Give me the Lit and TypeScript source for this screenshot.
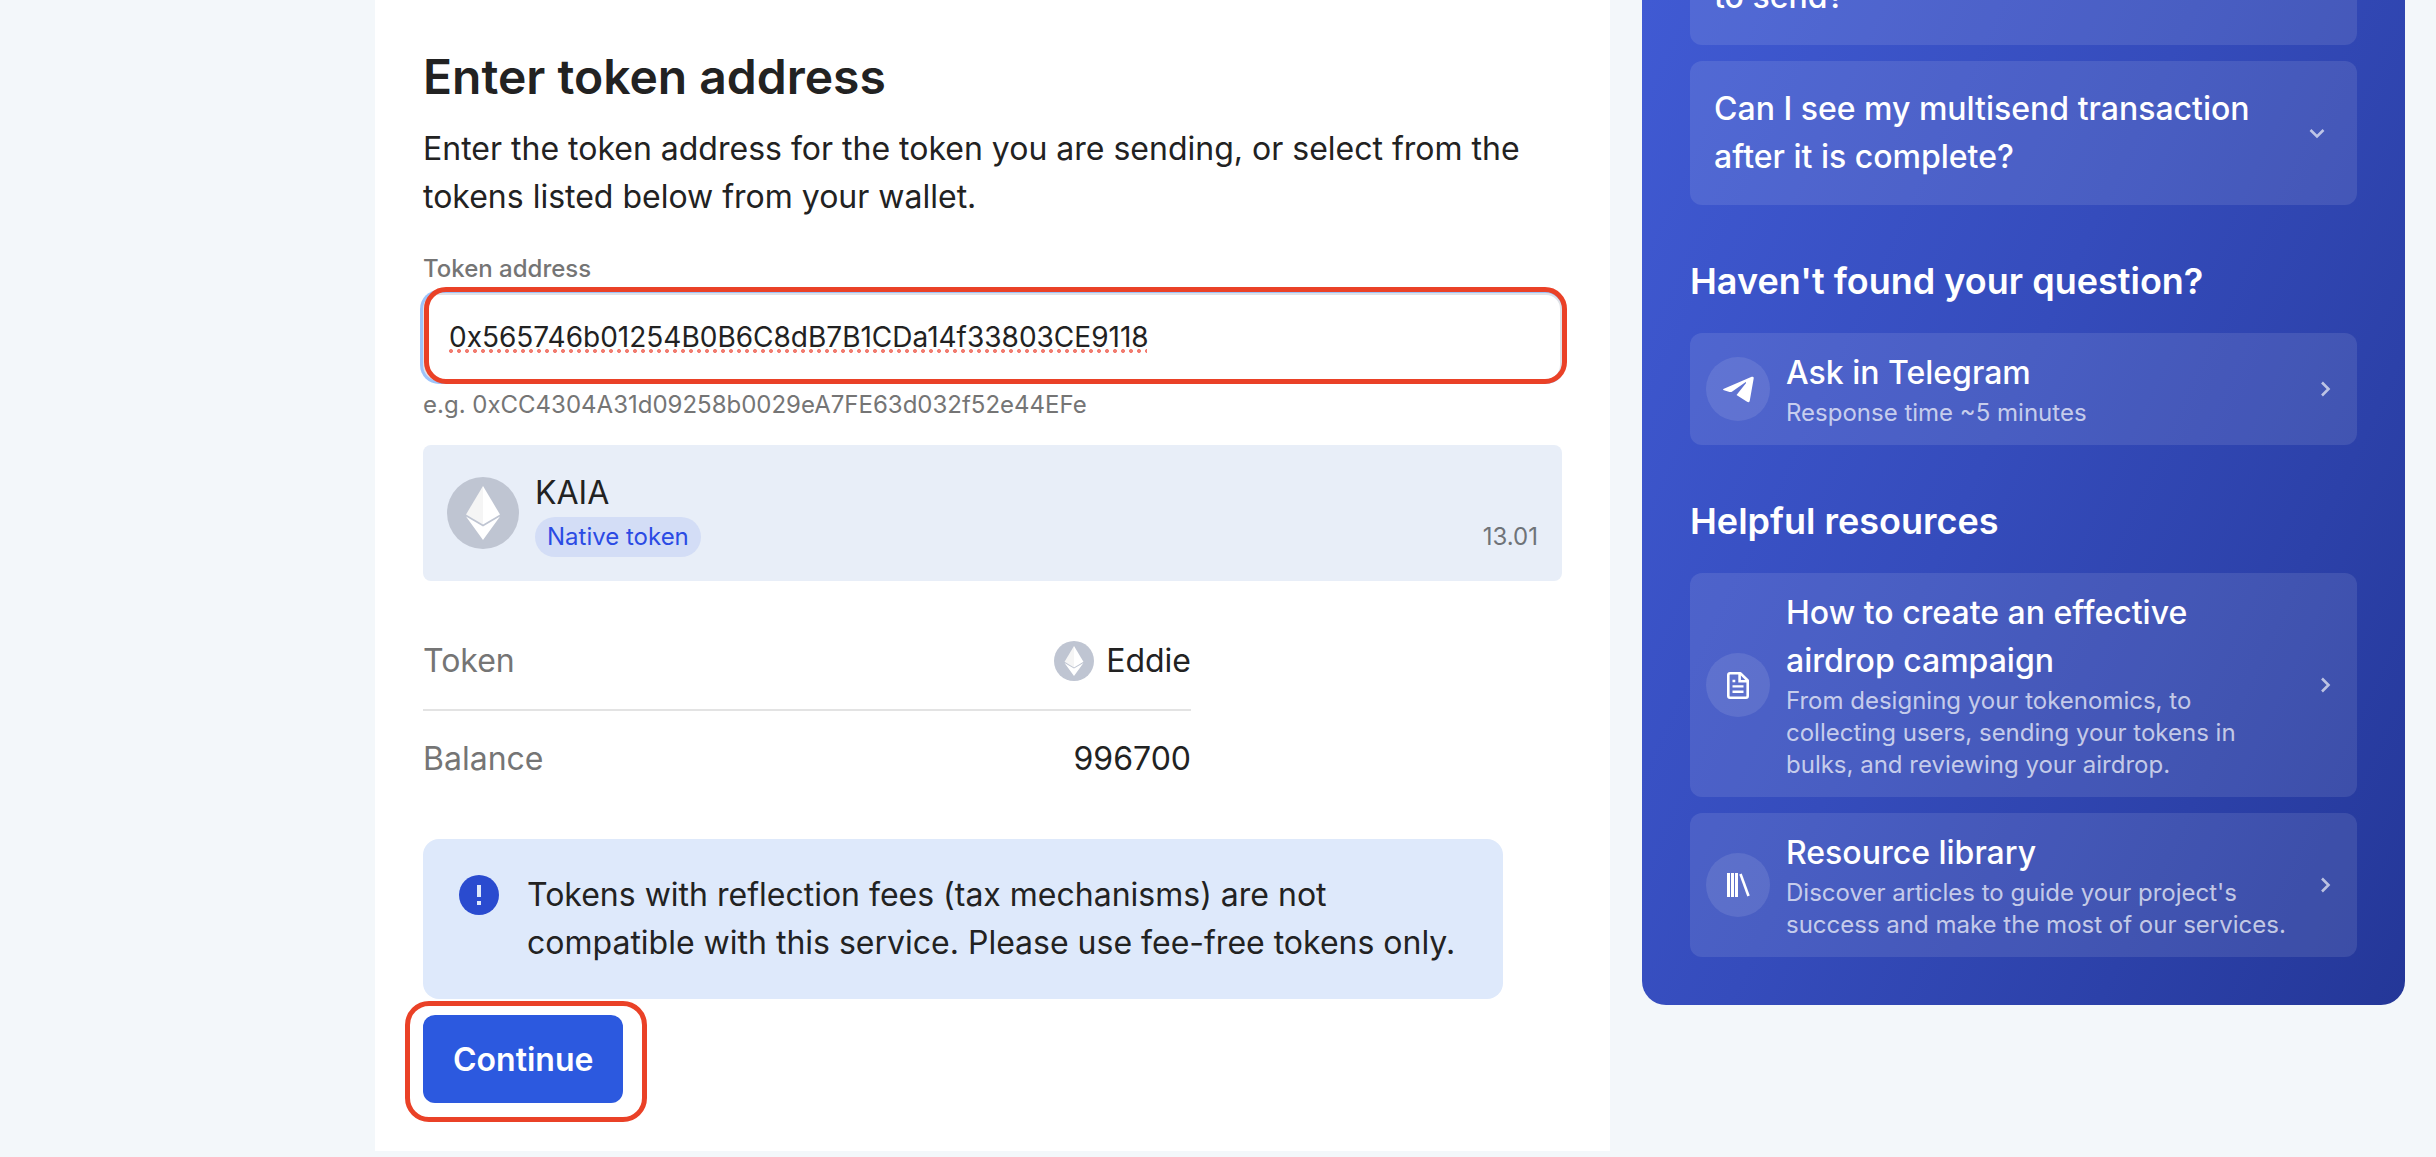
import { LitElement, html, svg, css, nothing } from "lit";
import { customElement, property, state } from "lit/decorators.js";

/** Round token badge with the two-part diamond mark. */
@customElement("token-icon")
class TokenIcon extends LitElement {
  static styles = css`
    :host { display: block; flex: none; width: 72px; height: 72px; }
    :host([small]) { width: 40px; height: 40px; }
    .mark { display: block; width: 100%; height: 100%; }
  `;
  render() {
    return html`<svg class="mark" viewBox="0 0 72 72" aria-hidden="true">
      <circle cx="36" cy="36" r="36" fill="#bfc5d2" />
      <path d="M36 9 L19 37.5 L36 47.5 Z" fill="#f5f5f5" />
      <path d="M36 9 L53 37.5 L36 47.5 Z" fill="#ffffff" />
      <path d="M19 39.5 L36 49.5 L53 39.5 L36 63 Z" fill="#ffffff" />
    </svg>`;
  }
}

const telegram = svg`<svg width="31" height="27" viewBox="67 109 94 81" fill="#fff" aria-hidden="true">
  <path d="M68 148 L154 111 Q161 109 160 116 L148 184 Q146 191 140 187 L108 166 L137 130 L136 127 L94 156 Q91 158 87 157 L70 152 Q66 150 68 148 Z" />
</svg>`;

const article = svg`<svg width="22" height="27" viewBox="0 0 22 27" fill="none" stroke="#fff" stroke-width="2.6" aria-hidden="true">
  <path d="M3 1.3 H13.5 L20.7 8.5 V24 Q20.7 25.7 19 25.7 H3 Q1.3 25.7 1.3 24 V3 Q1.3 1.3 3 1.3 Z" stroke-linejoin="round" />
  <path d="M12.6 1.5 V9.2 H20.5" />
  <path d="M5.5 9 H8.3 M5.5 14.4 H16.5 M5.5 19.8 H16.5" stroke-width="2.4" />
</svg>`;

const library = svg`<svg width="23" height="24" viewBox="0 0 23 24" fill="none" stroke="#fff" stroke-width="3" aria-hidden="true">
  <path d="M1.5 0 V24 M5.5 0 V24 M9.5 0 V24" />
  <path d="M13.5 1 L21.5 23" stroke-width="2.6" />
</svg>`;

interface Resource {
  icon: unknown;
  title: string;
  text: string;
}

@customElement("help-link")
class HelpLink extends LitElement {
  @property({ attribute: false }) item!: Resource;
  static styles = css`
    :host { display: block; }
    .card {
      display: flex; align-items: center; gap: 16px; padding: 16px 24px 16px 16px;
      border-radius: 12px; background: rgba(255, 255, 255, 0.1);
      color: #fff; text-decoration: none;
    }
    .badge {
      display: flex; align-items: center; justify-content: center; flex: none;
      width: 64px; height: 64px; border-radius: 50%; background: rgba(255, 255, 255, 0.1);
    }
    .body { flex: 1; min-width: 0; }
    .title { display: block; font-size: 32px; line-height: 48px; font-weight: 500; }
    .text { display: block; font-size: 24px; line-height: 32px; color: rgba(255, 255, 255, 0.7); }
    .arrow { flex: none; }
  `;
  render() {
    return html`<a class="card" href="#">
      <span class="badge">${this.item.icon}</span>
      <span class="body">
        <span class="title">${this.item.title}</span>
        <span class="text">${this.item.text}</span>
      </span>
      <svg class="arrow" width="16" height="16" viewBox="0 0 16 16" fill="none"
        stroke="#fff" stroke-opacity="0.65" stroke-width="2.6" aria-hidden="true">
        <path d="M5 1.5 L11.5 8 L5 14.5" />
      </svg>
    </a>`;
  }
}

@customElement("help-panel")
class HelpPanel extends LitElement {
  static styles = css`
    :host { display: block; }
    .panel {
      padding: 0 48px 48px; border-radius: 0 0 24px 24px; color: #fff;
      background: linear-gradient(115deg, #405ad3 0%, #354cbc 45%, #2c41a9 75%, #243798 100%);
    }
    .question {
      display: flex; align-items: center; justify-content: space-between; gap: 24px;
      box-sizing: border-box; width: 100%; padding: 24px 32px 24px 24px; border: 0;
      border-radius: 12px; background: rgba(255, 255, 255, 0.1);
      color: #fff; font: inherit; font-size: 32px; line-height: 48px; font-weight: 500;
      text-align: left;
    }
    .question.cut {
      align-items: flex-end; height: 45px; padding-top: 0; margin-bottom: 16px;
      border-radius: 0 0 12px 12px;
    }
    .label { min-width: 0; max-width: 560px; }
    .arrow { flex: none; }
    .heading { margin: 48px 0 24px; font-size: 36px; line-height: 56px; font-weight: 600; }
    .list { display: grid; gap: 16px; }
  `;
  private contact: Resource[] = [
    { icon: telegram, title: "Ask in Telegram", text: "Response time ~5 minutes" },
  ];
  private resources: Resource[] = [
    {
      icon: article,
      title: "How to create an effective airdrop campaign",
      text: "From designing your tokenomics, to collecting users, sending your tokens in bulks, and reviewing your airdrop.",
    },
    {
      icon: library,
      title: "Resource library",
      text: "Discover articles to guide your project's success and make the most of our services.",
    },
  ];
  private list(items: Resource[]) {
    return html`<div class="list">
      ${items.map((item) => html`<help-link .item=${item}></help-link>`)}
    </div>`;
  }
  render() {
    return html`<aside class="panel">
      <button class="question cut" type="button"><span class="label">to send?</span></button>
      <button class="question" type="button" aria-expanded="false">
        <span class="label">Can I see my multisend transaction after it is complete?</span>
        <svg class="arrow" width="16" height="16" viewBox="0 0 16 16" fill="none"
          stroke="#fff" stroke-opacity="0.65" stroke-width="2.6" aria-hidden="true">
          <path d="M1.5 5 L8 11.5 L14.5 5" />
        </svg>
      </button>
      <h2 class="heading">Haven't found your question?</h2>
      ${this.list(this.contact)}
      <h2 class="heading">Helpful resources</h2>
      ${this.list(this.resources)}
    </aside>`;
  }
}

@customElement("app-root")
class AppRoot extends LitElement {
  @state() private address = "0x565746b01254B0B6C8dB7B1CDa14f33803CE9118";

  static styles = css`
    :host {
      display: block; min-height: 100vh; background: #f3f7fa; color: #222;
      font-family: Inter, "Liberation Sans", sans-serif;
    }
    .page {
      display: grid; grid-template-columns: minmax(0, 1235fr) minmax(0, 763fr);
      align-items: start; gap: 32px; padding: 0 31px 0 375px;
    }
    .main { padding: 48px; background: #fff; }
    .heading { margin: 0 0 20px; font-size: 48px; line-height: 57px; font-weight: 600; }
    .lead { margin: 0 0 32px; font-size: 32px; line-height: 48px; }
    .field { display: grid; gap: 8px; margin-bottom: 24px; }
    .caption, .hint { font-size: 24px; line-height: 32px; color: #757575; }
    .caption { font-weight: 500; }
    .control { position: relative; }
    .address {
      display: block; box-sizing: border-box; width: 100%; height: 88px; padding: 0 24px;
      border: 2px solid #e0e3e8; border-radius: 16px; outline: 0; background: #fff;
      box-shadow: 0 0 0 3px #9dc4fb; color: #222; font: inherit; font-size: 28px;
    }
    .spelling {
      position: absolute; left: 26px; top: 56px; width: 698px; height: 4px;
      background: radial-gradient(circle at 2px 2px, #f27c70 1.6px, transparent 2.3px) 0 0 / 8px 4px repeat-x;
      pointer-events: none;
    }
    .ring { position: absolute; border: 5px solid #ea4127; border-radius: 22px; pointer-events: none; }
    .ring.wide { inset: -6px -5px -3px 1px; }
    .ring.around { inset: -14px -24px -19px -18px; border-radius: 24px; }
    .token {
      display: flex; align-items: center; gap: 16px; box-sizing: border-box; width: 100%;
      padding: 24px; border: 0; border-radius: 8px; background: #e8eef8;
      color: #222; font: inherit; text-align: left;
    }
    .names { display: grid; flex: 1; justify-items: start; }
    .name { font-size: 32px; line-height: 48px; }
    .tag {
      padding: 4px 12px; border-radius: 20px; background: #d3ddf6; color: #2b4be4;
      font-size: 24px; line-height: 32px;
    }
    .amount { align-self: flex-end; font-size: 24px; line-height: 40px; color: #6f7378; }
    .details { max-width: 768px; margin: 32px 0; font-size: 32px; line-height: 48px; }
    .row { display: flex; justify-content: space-between; padding: 24px 0; }
    .row + .row { border-top: 2px solid #e3e3e3; }
    .term { color: #757575; }
    .value { display: flex; align-items: center; gap: 12px; margin: 0; }
    .notice {
      display: flex; align-items: flex-start; gap: 28px; box-sizing: border-box;
      max-width: 1080px; margin-bottom: 16px; padding: 32px 36px; border-radius: 16px;
      background: #dee9fb; font-size: 32px; line-height: 48px;
    }
    .alert { flex: none; margin-top: 4px; }
    .message { margin: 0; }
    .action { position: relative; width: fit-content; }
    .continue {
      display: block; height: 88px; padding: 0 30px; border: 0; border-radius: 12px;
      background: #2c59df; color: #fff; font: inherit; font-size: 32px; font-weight: 600;
    }
  `;

  private onInput(event: Event) {
    this.address = (event.target as HTMLInputElement).value;
  }

  render() {
    return html`<div class="page">
      <main class="main">
        <h1 class="heading">Enter token address</h1>
        <p class="lead">
          Enter the token address for the token you are sending, or select from the tokens listed
          below from your wallet.
        </p>
        <div class="field">
          <label class="caption" for="address">Token address</label>
          <div class="control">
            <input class="address" id="address" type="text" spellcheck="false"
              aria-describedby="hint" .value=${this.address} @input=${this.onInput} />
            ${this.address ? html`<span class="spelling"></span>` : nothing}
            <span class="ring wide"></span>
          </div>
          <span class="hint" id="hint">e.g. 0xCC4304A31d09258b0029eA7FE63d032f52e44EFe</span>
        </div>
        <button class="token" type="button">
          <token-icon></token-icon>
          <span class="names">
            <span class="name">KAIA</span>
            <span class="tag">Native token</span>
          </span>
          <span class="amount">13.01</span>
        </button>
        <dl class="details">
          <div class="row">
            <dt class="term">Token</dt>
            <dd class="value"><token-icon small></token-icon>Eddie</dd>
          </div>
          <div class="row">
            <dt class="term">Balance</dt>
            <dd class="value">996700</dd>
          </div>
        </dl>
        <div class="notice" role="note">
          <svg class="alert" width="40" height="40" viewBox="0 0 40 40" aria-hidden="true">
            <circle cx="20" cy="20" r="20" fill="#2a4bcf" />
            <path d="M18 10 h4 v12 h-4 z M18 26 h4 v4 h-4 z" fill="#dfe9fb" />
          </svg>
          <p class="message">
            Tokens with reflection fees (tax mechanisms) are not compatible with this service.
            Please use fee-free tokens only.
          </p>
        </div>
        <div class="action">
          <button class="continue" type="button">Continue</button>
          <span class="ring around"></span>
        </div>
      </main>
      <help-panel></help-panel>
    </div>`;
  }
}
